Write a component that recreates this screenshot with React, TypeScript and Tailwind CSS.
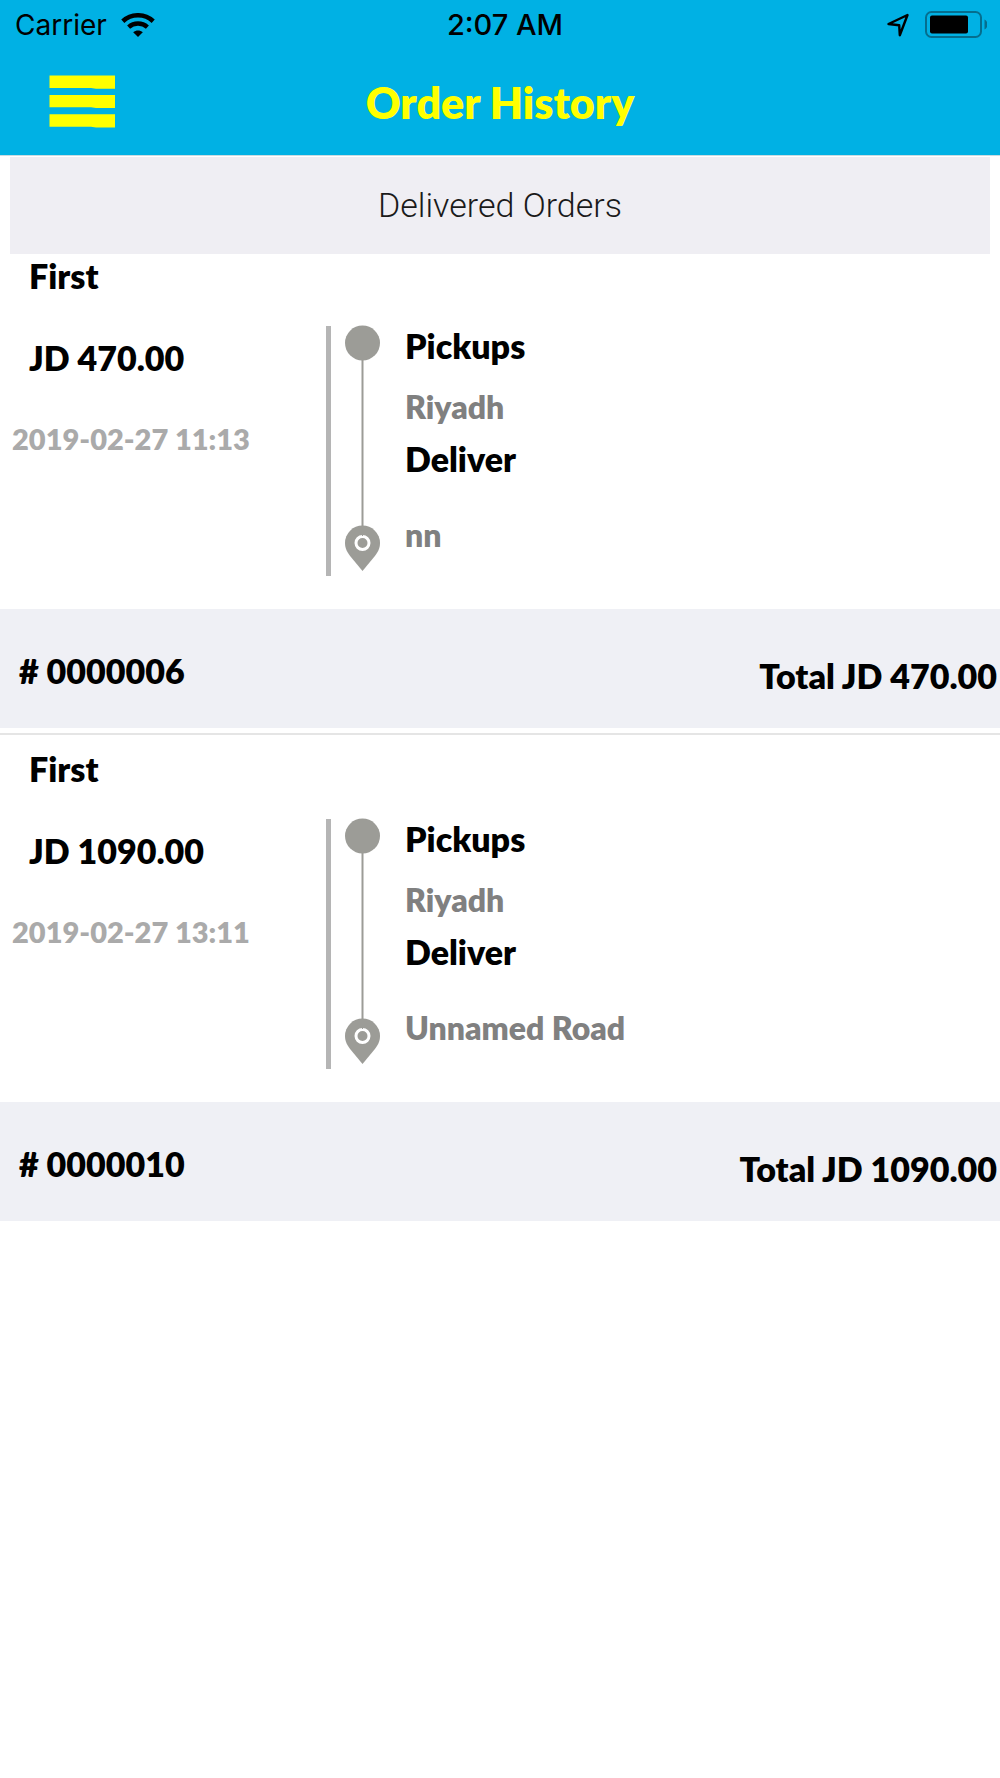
import React from "react";

interface Order {
  id: string;
  name: string;
  price: string;
  date: string;
  pickup: string;
  deliver: string;
}

const orders: Order[] = [
  {
    id: "0000006",
    name: "First",
    price: "JD 470.00",
    date: "2019-02-27 11:13",
    pickup: "Riyadh",
    deliver: "nn",
  },
  {
    id: "0000010",
    name: "First",
    price: "JD 1090.00",
    date: "2019-02-27 13:11",
    pickup: "Riyadh",
    deliver: "Unnamed Road",
  },
];

export default function App() {
  return (
    <div className="min-h-screen bg-white font-['Lato',sans-serif] text-black">
      <header className="border-b border-[#c8dbe2] bg-[#00b1e4]">
        <StatusBar />
        <div className="grid h-[105px] grid-cols-[1fr_auto_1fr] items-center px-12">
          <button type="button" aria-label="Menu" className="w-fit">
            <MenuIcon />
          </button>
          <h1 className="text-[43px] leading-[50px] font-extrabold text-[#ffff00]">
            Order History
          </h1>
        </div>
      </header>
      <main>
        <h2 className="mx-[10px] mt-px mb-[2px] bg-[#efeef3] pt-7 pb-[29px] text-center font-['Roboto',sans-serif] text-[34px] leading-10 font-light text-[#1a1a1a]">
          Delivered Orders
        </h2>
        <ul>
          {orders.map((order) => (
            <li
              key={order.id}
              className="not-first:mt-[5px] not-first:border-t-2 not-first:border-[#e5e5e5] not-first:pt-[14px]"
            >
              <OrderCard order={order} />
            </li>
          ))}
        </ul>
      </main>
    </div>
  );
}

function StatusBar() {
  return (
    <div className="grid h-[50px] grid-cols-[1fr_auto_1fr] items-center pr-[13px] pl-[15px] font-['Inter',sans-serif] text-[28px] leading-10">
      <div className="flex items-center gap-[14px]">
        <span>Carrier</span>
        <WifiIcon />
      </div>
      <span className="pl-2 text-[29px] font-medium">2:07 AM</span>
      <div className="flex items-center justify-end gap-4">
        <LocationIcon />
        <BatteryIcon />
      </div>
    </div>
  );
}

function OrderCard({ order }: { order: Order }) {
  return (
    <article className="text-[34px] leading-10 font-extrabold">
      <div className="flex h-[353px]">
        <div className="w-[326px] shrink-0">
          <p className="pl-[29px]">{order.name}</p>
          <p className="mt-[42px] pl-[29px]">{order.price}</p>
          <p className="mt-[43px] pl-3 text-[29px] leading-9 text-[#aaaaaa]">
            {order.date}
          </p>
        </div>
        <div className="mt-[70px] h-[250px] w-[5px] bg-[#b5b5b5]" />
        <div className="mt-[69px] ml-[14px]">
          <RouteIcon />
        </div>
        <div className="mt-[70px] ml-[25px]">
          <p>Pickups</p>
          <p className="mt-[21px] text-[32px] text-[#808080]">{order.pickup}</p>
          <p className="mt-3">Deliver</p>
          <p className="mt-9 text-[32px] text-[#808080]">{order.deliver}</p>
        </div>
      </div>
      <footer className="flex h-[119px] justify-between bg-[#eff0f5] pr-[3px] pl-[19px]">
        <p className="pt-[42px]"># {order.id}</p>
        <p className="pt-[47px]">Total {order.price}</p>
      </footer>
    </article>
  );
}

function MenuIcon() {
  return (
    <svg
      width="68"
      height="54"
      viewBox="0 0 68 54"
      fill="#ffff00"
      className="-mt-px"
    >
      <path d="M1.500 .6h65.500v13.200h-19l-5-.7h-41.500z" />
      <path d="M1.500 20h65.500v13h-19l-5-.7h-41.500z" />
      <path d="M1.500 39.300h65.500v13.200h-19l-5-.7h-41.500z" />
    </svg>
  );
}

function WifiIcon() {
  return (
    <svg width="34" height="25" viewBox="0 0 34 25" fill="none" stroke="#000">
      <path d="M1.8 8.2A22.5 22.5 0 0 1 32.2 8.2" strokeWidth="4.6" />
      <path d="M7.6 14.2A14 14 0 0 1 26.4 14.2" strokeWidth="4.4" />
      <path
        d="M12.2 19.2C15 17 19 17 21.8 19.2L17 24z"
        fill="#000"
        stroke="none"
      />
    </svg>
  );
}

function LocationIcon() {
  return (
    <svg
      width="22"
      height="24"
      viewBox="0 0 22 24"
      fill="none"
      stroke="#000"
      strokeWidth="2.4"
      strokeLinejoin="round"
    >
      <path d="M20.5 2L1.5 11L12.2 12.2L12.8 22.3z" />
    </svg>
  );
}

function BatteryIcon() {
  return (
    <svg width="62" height="28" viewBox="0 0 62 28" fill="none">
      <rect
        x="1"
        y="1"
        width="55"
        height="25"
        rx="5.5"
        stroke="#056e8e"
        strokeWidth="2"
      />
      <rect x="5" y="4.5" width="38" height="18" rx="2" fill="#000" />
      <path d="M59.500 8.500c4 2 4 8 0 10z" fill="#056e8e" />
    </svg>
  );
}

function RouteIcon() {
  return (
    <svg width="35" height="247" viewBox="0 0 35 247" fill="#9c9c97">
      <rect x="16.5" y="30" width="2" height="175" />
      <circle cx="17.5" cy="18" r="17.5" />
      <path d="M17.5 200.5A17.5 17.5 0 0 0 0 218c0 6 2.5 9.5 5.5 13.5L17.5 246L29.5 231.5C32.5 227.5 35 224 35 218A17.5 17.5 0 0 0 17.5 200.5z" />
      <circle
        cx="17.5"
        cy="218"
        r="6.5"
        fill="none"
        stroke="#fff"
        strokeWidth="3"
      />
      <path d="M17 209.5h1v1.5h-1z" />
    </svg>
  );
}
